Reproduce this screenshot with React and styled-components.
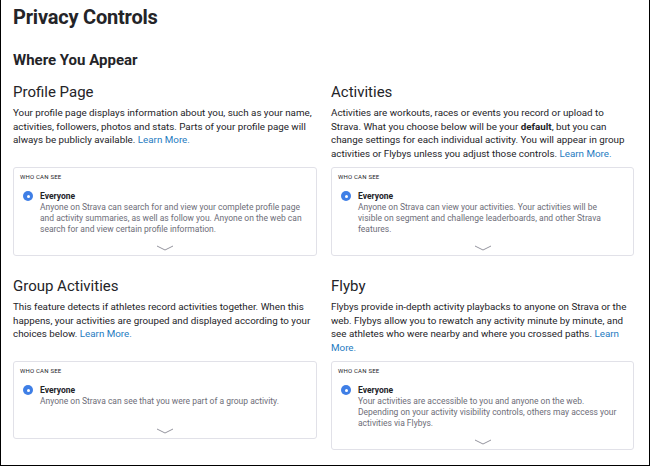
import React from "react"
import styled, { createGlobalStyle } from "styled-components"

const GlobalStyle = createGlobalStyle`
  html, body {
    margin: 0;
    padding: 0;
    background: #fff;
  }
  body {
    font-family: Roboto, "Noto Sans", "Liberation Sans", sans-serif;
    color: #242428;
  }
`

const Page = styled.div`
  width: 650px;
  height: 466px;
  box-sizing: border-box;
  border: 1px solid #000;
  border-top: none;
  padding: 0 14px 0 12px;
  overflow: hidden;
`

const Title = styled.h1`
  font-size: 20px;
  font-weight: 700;
  letter-spacing: -0.2px;
  margin: 3px 0 0;
  line-height: 29px;
`

const SectionTitle = styled.h2`
  font-size: 15px;
  font-weight: 700;
  margin: 18px 0 0;
  line-height: 20px;
`

const Grid = styled.div`
  display: grid;
  grid-template-columns: 304px 303px;
  column-gap: 14px;
  row-gap: 7px;
  margin-top: 12px;
`

const Intro = styled.div`
  margin-top: ${(p) => p.$offset || 0}px;
`

const Heading = styled.h3`
  font-size: 15px;
  font-weight: 400;
  margin: 0 0 4px;
  line-height: 20px;
`

const Text = styled.p`
  font-size: 9.8px;
  line-height: 13.5px;
  margin: 0;
  b {
    font-weight: 700;
  }
`

const Link = styled.a`
  color: #1f7cbf;
  text-decoration: none;
`

const Card = styled.div`
  border: 1px solid #e1e1e8;
  border-radius: 3px;
  padding: 5px 14px 4px 6px;
  align-self: start;
`

const Label = styled.div`
  font-size: 6px;
  text-transform: uppercase;
  letter-spacing: 0.2px;
  line-height: 8px;
  margin-bottom: 9.5px;
`

const Option = styled.div`
  display: flex;
  gap: 7px;
  min-height: ${(p) => p.$minHeight || 0}px;
  padding-left: 3px;
`

const Radio = styled.span`
  flex: 0 0 auto;
  width: 10px;
  height: 10px;
  border-radius: 50%;
  background: #3f7fe6;
  margin-top: 0.5px;
  display: flex;
  align-items: center;
  justify-content: center;
  &::after {
    content: "";
    width: 3px;
    height: 3px;
    border-radius: 50%;
    background: #fff;
  }
`

const OptionName = styled.div`
  font-size: 8.5px;
  font-weight: 700;
  line-height: 11px;
`

const OptionText = styled.div`
  font-size: 8.5px;
  line-height: 11px;
  color: #6d6d78;
`

const Expand = styled.div`
  display: flex;
  justify-content: center;
  padding-top: 10.5px;
  padding-left: 8px;
  height: 6px;
`

const Chevron = () => (
  <svg width="18" height="6" viewBox="0 0 18 6">
    <polyline points="1,1 9,5 17,1" fill="none" stroke="#94949e" strokeWidth="1" />
  </svg>
)

const PrivacyCard = ({ text, minHeight }) => (
  <Card>
    <Label>Who can see</Label>
    <Option $minHeight={minHeight}>
      <Radio />
      <div>
        <OptionName>Everyone</OptionName>
        <OptionText>{text}</OptionText>
      </div>
    </Option>
    <Expand>
      <Chevron />
    </Expand>
  </Card>
)

export default function App() {
  return (
    <Page>
      <GlobalStyle />
      <Title>Privacy Controls</Title>
      <SectionTitle>Where You Appear</SectionTitle>
      <Grid>
        <Intro>
          <Heading>Profile Page</Heading>
          <Text>
            Your profile page displays information about you, such as your name, activities,
            followers, photos and stats. Parts of your profile page will always be publicly
            available. <Link>Learn More.</Link>
          </Text>
        </Intro>
        <Intro>
          <Heading>Activities</Heading>
          <Text>
            Activities are workouts, races or events you record or upload to Strava. What you
            choose below will be your <b>default</b>, but you can change settings for each
            individual activity. You will appear in group activities or Flybys unless you adjust
            those controls. <Link>Learn More.</Link>
          </Text>
        </Intro>
        <PrivacyCard text="Anyone on Strava can search for and view your complete profile page and activity summaries, as well as follow you. Anyone on the web can search for and view certain profile information." />
        <PrivacyCard text="Anyone on Strava can view your activities. Your activities will be visible on segment and challenge leaderboards, and other Strava features." />
        <Intro $offset={13}>
          <Heading>Group Activities</Heading>
          <Text>
            This feature detects if athletes record activities together. When this happens, your
            activities are grouped and displayed according to your choices below.{" "}
            <Link>Learn More.</Link>
          </Text>
        </Intro>
        <Intro $offset={13}>
          <Heading>Flyby</Heading>
          <Text>
            Flybys provide in-depth activity playbacks to anyone on Strava or the web. Flybys
            allow you to rewatch any activity minute by minute, and see athletes who were nearby
            and where you crossed paths. <Link>Learn More.</Link>
          </Text>
        </Intro>
        <PrivacyCard
          minHeight={33}
          text="Anyone on Strava can see that you were part of a group activity."
        />
        <PrivacyCard text="Your activities are accessible to you and anyone on the web. Depending on your activity visibility controls, others may access your activities via Flybys." />
      </Grid>
    </Page>
  )
}
